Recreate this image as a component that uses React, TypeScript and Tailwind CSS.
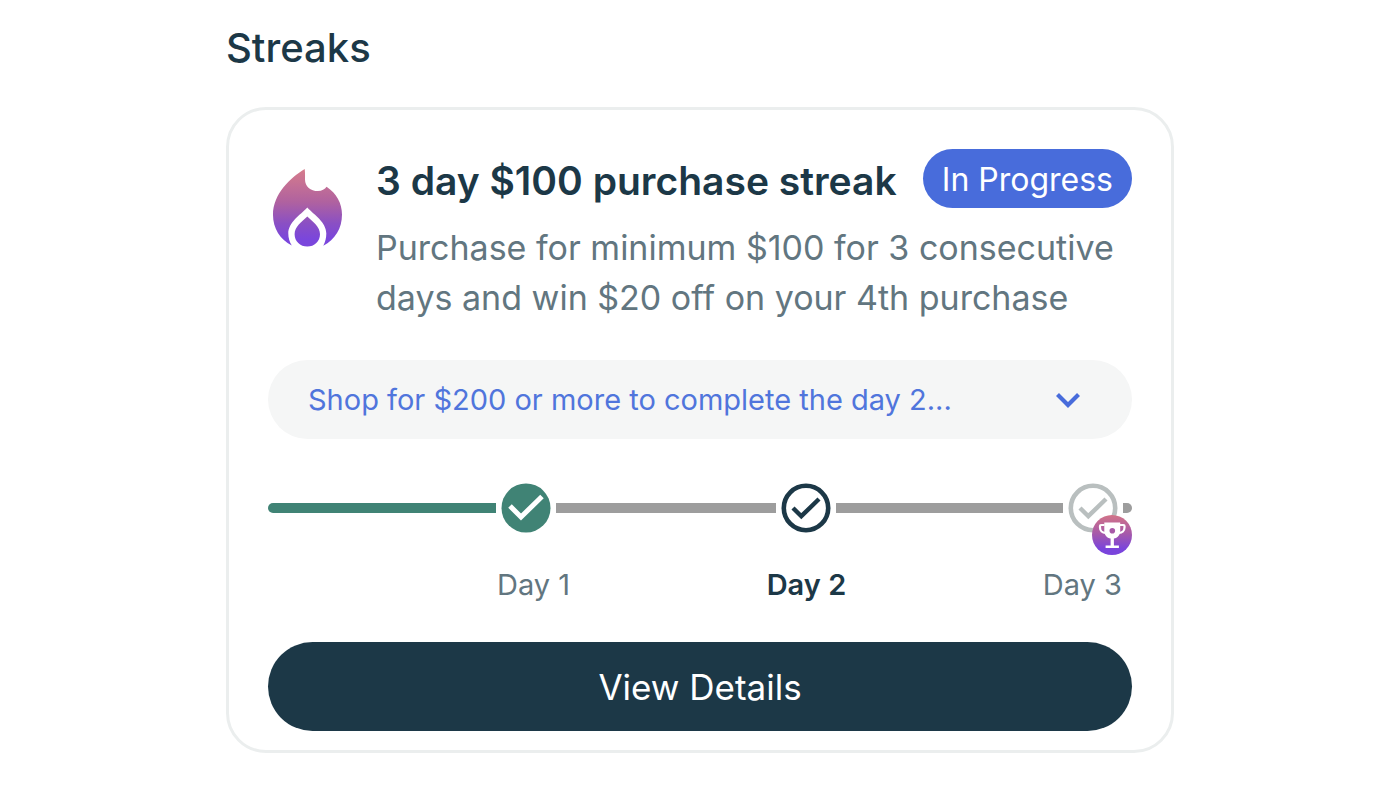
import { useState } from "react";

function FlameIcon() {
  return (
    <svg viewBox="0 0 72 78" className="h-[78px] w-[72px]" aria-hidden="true">
      <defs>
        <linearGradient id="flame-fill" x1="0" y1="0" x2="0" y2="78" gradientUnits="userSpaceOnUse">
          <stop offset="0" stopColor="#d67c8c" />
          <stop offset="0.42" stopColor="#b0629f" />
          <stop offset="0.7" stopColor="#8a4fc4" />
          <stop offset="0.9" stopColor="#7a46dc" />
        </linearGradient>
      </defs>
      <path
        fill="url(#flame-fill)"
        d="M32.700 0C18 9 1 25 1 46c0 13 7 24.500 18.800 30.600C17.500 73 16.300 69 16.300 64.600c0-11.600 12-18.600 19-26.200 7 7.600 19 14.600 19 26.200 0 4.400-1 8.400-3 12.200C63 70.500 70 59.500 70 45.500 70 34.500 64.500 24.500 54.600 17.800c-1.800 2.400-4.800 4.300-8.600 4.300-7.500 0-13-4.600-13-11.600C33 7 33.200 3.500 32.700 0Z"
      />
      <path
        fill="url(#flame-fill)"
        d="M35.300 47.400C41 52.800 48 57.500 48 65.200 48 72.400 42.400 77.500 35.300 77.500S22.600 72.400 22.600 65.200c0-7.700 7-12.400 12.700-17.800Z"
      />
    </svg>
  );
}

function TrophyIcon() {
  return (
    <svg viewBox="0 0 40 40" className="size-10" aria-hidden="true">
      <defs>
        <linearGradient id="trophy-fill" x1="0" y1="0" x2="0" y2="1">
          <stop offset="0" stopColor="#d27488" />
          <stop offset="0.45" stopColor="#a85aa8" />
          <stop offset="0.85" stopColor="#7a44dc" />
        </linearGradient>
      </defs>
      <circle cx="20" cy="20" r="20" fill="url(#trophy-fill)" />
      <path
        d="M12.500 10H9q-1 0-1 1v1.500c0 3.500 2.500 5.500 5.500 5.500M28 10h3.500q1 0 1 1v1.500c0 3.500-2.500 5.500-5.500 5.500"
        fill="none"
        stroke="#fff"
        strokeWidth="2.200"
      />
      <path
        d="M12.300 7.500h15.900v8.500c0 4-2.600 7-6.300 7.600v6.900h5v2.400H13.600v-2.400h5v-6.900c-3.700-.6-6.300-3.600-6.300-7.600Z"
        fill="#fff"
      />
      <circle cx="20.300" cy="15.800" r="2.800" fill="#a85aa8" />
    </svg>
  );
}

type Status = "done" | "current" | "upcoming";

function StepMarker({ status }: { status: Status }) {
  if (status === "done") {
    return (
      <svg viewBox="0 0 50 50" className="size-[50px]" aria-hidden="true">
        <circle cx="25" cy="25" r="24.500" fill="#408375" />
        <path d="M9 23 20 34 41 13.500" fill="none" stroke="#fff" strokeWidth="5" />
      </svg>
    );
  }
  const color = status === "current" ? "#1c3847" : "#b9bfbf";
  return (
    <svg viewBox="0 0 50 50" className="size-[50px]" aria-hidden="true">
      <circle cx="25" cy="25" r="22.200" fill="#fff" stroke={color} strokeWidth="4.600" />
      <path d="M12 25 20.300 33.200 38 16" fill="none" stroke={color} strokeWidth="4.400" />
    </svg>
  );
}

export default function App() {
  const [open, setOpen] = useState(false);
  return (
    <main className="mx-auto w-full max-w-[948px] bg-white pt-6 pb-8 font-['Inter',sans-serif] text-[#1c3847]">
      <h1 className="text-[40px] leading-12 font-medium">Streaks</h1>

      <section className="mt-[35px] rounded-[40px] border-3 border-[#ebeeee] px-[39px] pt-[39px] pb-[19px]">
        <div className="flex gap-8">
          <div className="w-[76px] shrink-0 pt-[20px] pl-1">
            <FlameIcon />
          </div>
          <div className="min-w-0 flex-1">
            <div className="flex items-center justify-between">
              <h2 className="pt-1 text-[39px] leading-12 font-semibold whitespace-nowrap">3 day $100 purchase streak</h2>
              <span className="flex h-[59px] shrink-0 items-center rounded-full bg-[#486cdb] px-[19px] pt-[2px] text-[32px] whitespace-nowrap text-white">
                In Progress
              </span>
            </div>
            <p className="mt-[15px] text-[34px] leading-[50px] text-[#627680]">
              Purchase for minimum $100 for 3 consecutive days and win $20 off on your 4th purchase
            </p>
          </div>
        </div>

        <button
          type="button"
          aria-expanded={open}
          onClick={() => setOpen(!open)}
          className="mt-[37px] flex h-[79px] w-full items-center justify-between rounded-full bg-[#f5f6f6] pr-[51px] pl-10 text-[29px] text-[#5075dc]"
        >
          <span className="whitespace-nowrap">Shop for $200 or more to complete the day 2...</span>
          <svg viewBox="0 0 26 18" className="h-[18px] w-[26px]" aria-hidden="true">
            <path d="M2.500 3.500 13 14 23.500 3.500" fill="none" stroke="#486cdb" strokeWidth="4.200" />
          </svg>
        </button>

        <div className="mt-11 flex items-center gap-[5px]">
          <div className="h-[10px] grow-[228] rounded-l-full bg-[#408375]" />
          <StepMarker status="done" />
          <div className="h-[10px] grow-[220] bg-[#9d9d9d]" />
          <StepMarker status="current" />
          <div className="h-[10px] grow-[227] bg-[#9d9d9d]" />
          <div className="relative">
            <StepMarker status="upcoming" />
            <span className="absolute top-8 left-6">
              <TrophyIcon />
            </span>
          </div>
          <div className="h-[10px] w-[9px] rounded-r-full bg-[#9d9d9d]" />
        </div>

        <div className="mt-8 flex justify-between pr-[10px] pl-[229px] text-[29px] leading-10 text-[#627680]">
          <span>Day 1</span>
          <span className="font-semibold text-[#1c3847]">Day 2</span>
          <span>Day 3</span>
        </div>

        <button
          type="button"
          className="mt-[37px] flex h-[89px] w-full items-center justify-center rounded-full bg-[#1c3847] pt-[2px] text-[35px] text-white"
        >
          View Details
        </button>
      </section>
    </main>
  );
}
